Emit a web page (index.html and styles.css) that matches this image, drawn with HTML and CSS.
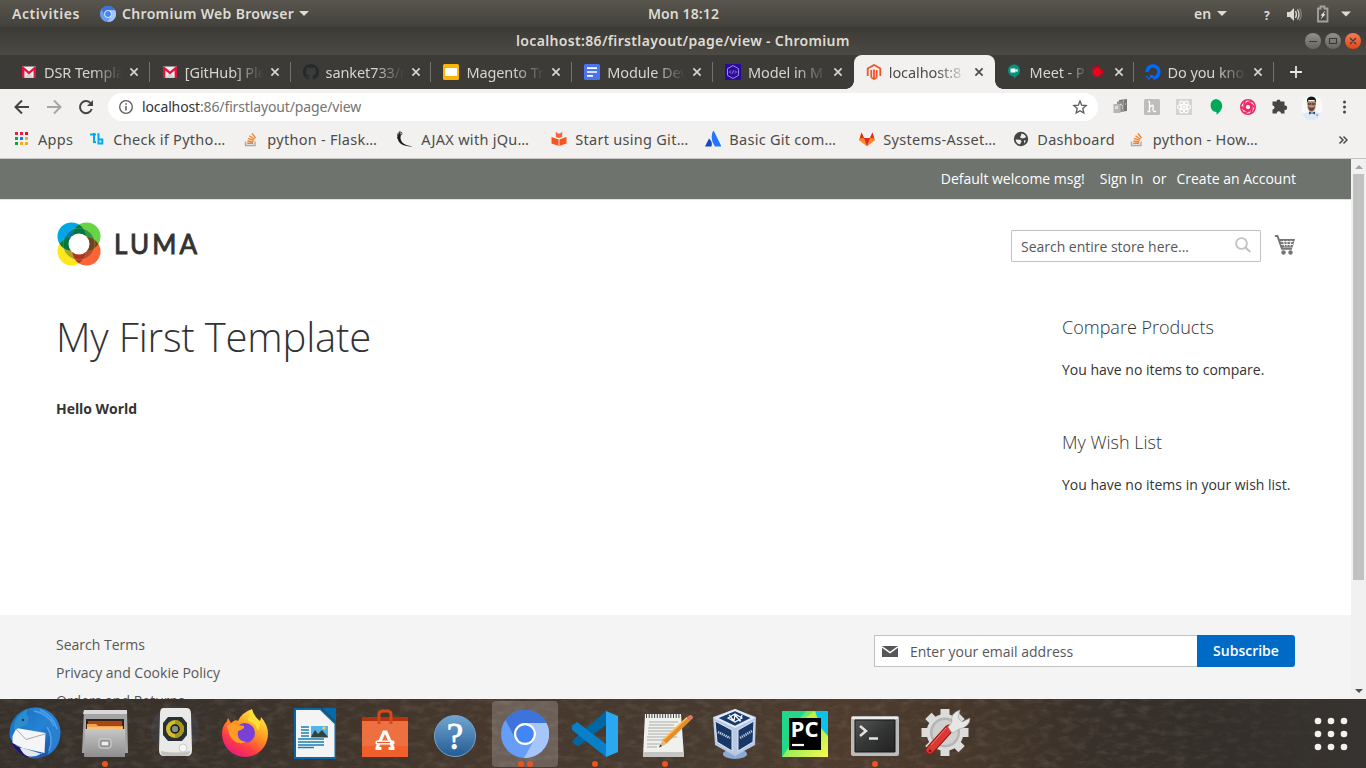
FILE: index.html
```html
<!DOCTYPE html>
<html lang="en">
<head>
<meta charset="utf-8">
<title>localhost:86/firstlayout/page/view</title>
<link rel="stylesheet" href="styles.css">
</head>
<body>
<svg class="defs" width="0" height="0">
  <symbol id="x" viewBox="0 0 10 10"><path d="M1.400 1.400l7.200 7.200M8.600 1.400L1.400 8.600" stroke="currentColor" stroke-width="1.700" fill="none"/></symbol>
  <symbol id="gmail" viewBox="0 0 16 16"><path d="M1 2.500h14V14H1z" fill="#eee"/><path d="M3 14l5-5 5 5z" fill="#d2d2d2"/><path d="M1 14V2.500h1.200L8 7.500l5.800-5H15V14h-2.400V6.500L8 10.400 3.400 6.500V14z" fill="#e2143c"/></symbol>
  <symbol id="so" viewBox="0 0 16 16"><path d="M2.500 10.500v4h9.500v-4" fill="none" stroke="#a7a9ab" stroke-width="1.400"/><path d="M4.200 12.300h6M4.400 10l6 .9M5 7.400l5.800 2M6.500 4.700l5 3.600M9 2.300l3.600 4.900" stroke="#f48024" stroke-width="1.400" fill="none"/></symbol>
  <symbol id="chromium" viewBox="0 0 48 48"><circle cx="24" cy="24" r="24" fill="#669df6"/><path d="M4.500 10A24 24 0 0 1 45.500 13H24A11 11 0 0 0 13.500 27z" fill="#3f73dc"/><path d="M45.500 13A24 24 0 0 1 23 48L33.500 29.500A11 11 0 0 0 24 13z" fill="#a6c5fa"/><circle cx="24" cy="24" r="11" fill="#fff"/><circle cx="24" cy="24" r="8.800" fill="#4285f4"/></symbol>
</svg>

<header class="topbar">
  <span class="activities">Activities</span>
  <svg class="app-ico" width="16" height="16"><use href="#chromium"/></svg>
  <span class="app-name">Chromium Web Browser</span><i class="caret"></i>
  <span class="clock">Mon 18:12</span>
  <span class="lang">en</span><i class="caret"></i>
  <svg class="tray" width="94" height="20" viewBox="0 0 94 20">
    <text x="4" y="16" class="tray-q">?</text>
    <path d="M27 8h3l4-4v13l-4-4h-3z" fill="#dfdbd2"/><path d="M35.500 7q2 3.500 0 7M37.500 5.500q3 5 0 10" fill="none" stroke="#dfdbd2" stroke-width="1.200"/><path d="M39.500 4.500q3.500 6 0 12" fill="none" stroke="#9b978f"/>
    <path d="M58 4.500h2.500v-2h4v2H67.500v13H58z" fill="none" stroke="#a5a29c" stroke-width="1.800"/><path d="M65.500 6.500l-5 5h2l-2 4 5-5.200h-2z" fill="#eee"/>
    <path d="M81 7.500h10l-5 5z" fill="#dfdbd2"/>
  </svg>
</header>

<div class="titlebar">
  <span class="win-title">localhost:86/firstlayout/page/view - Chromium</span>
  <svg class="win-btns" width="58" height="18" viewBox="0 0 58 18">
    <defs><linearGradient id="gb" x2="0" y2="1"><stop stop-color="#91908b"/><stop offset="1" stop-color="#65645f"/></linearGradient><linearGradient id="ob" x2="0" y2="1"><stop stop-color="#f37b57"/><stop offset="1" stop-color="#df4818"/></linearGradient></defs>
    <circle cx="9" cy="9" r="8" fill="url(#gb)"/><circle cx="29" cy="9" r="8" fill="url(#gb)"/><circle cx="49" cy="9" r="8" fill="url(#ob)"/>
    <path d="M5 9.500h8M25.500 6.500h7v5h-7zM46 6l6 6M52 6l-6 6" fill="none" stroke="#3a3935" stroke-width="1.100"/>
  </svg>
</div>

<nav class="tabs">
  <div class="tab"><svg class="fav"><use href="#gmail"/></svg><span class="t">DSR Templa</span><svg class="x"><use href="#x"/></svg></div>
  <div class="tab"><svg class="fav"><use href="#gmail"/></svg><span class="t">[GitHub] Ple</span><svg class="x"><use href="#x"/></svg></div>
  <div class="tab"><svg class="fav" viewBox="0 0 16 16"><path fill="#24292e" d="M8 0C3.580 0 0 3.580 0 8c0 3.540 2.290 6.530 5.470 7.590.4.070.55-.17.55-.38v-1.490c-2.230.48-2.700-.94-2.700-.94-.36-.92-.9-1.170-.9-1.170-.72-.5.060-.48.060-.48.8.06 1.230.82 1.230.82.7 1.220 1.870.87 2.330.66.070-.52.28-.87.5-1.070-1.770-.2-3.640-.89-3.640-3.950 0-.87.31-1.590.82-2.150-.08-.2-.36-1.020.080-2.120 0 0 .67-.21 2.200.82a7.600 7.600 0 0 1 4 0c1.530-1.040 2.200-.82 2.200-.82.44 1.100.16 1.920.080 2.120.51.56.82 1.270.82 2.150 0 3.070-1.870 3.750-3.650 3.950.29.25.54.73.54 1.480v2.190c0 .21.150.46.550.38A8 8 0 0 0 8 0z"/></svg><span class="t">sanket733/n</span><svg class="x"><use href="#x"/></svg></div>
  <div class="tab"><svg class="fav" viewBox="0 0 16 16"><rect width="16" height="16" rx="1.500" fill="#fbb605"/><path d="M2 4h12v8H2z" fill="#fff"/></svg><span class="t">Magento Tr</span><svg class="x"><use href="#x"/></svg></div>
  <div class="tab"><svg class="fav" viewBox="0 0 16 16"><rect width="16" height="16" rx="1.500" fill="#4a73f0"/><path d="M3 4.200h10M3 8h10M3 11.800h6" stroke="#fff" stroke-width="1.700"/></svg><span class="t">Module Dev</span><svg class="x"><use href="#x"/></svg></div>
  <div class="tab last"><svg class="fav" viewBox="0 0 16 16"><path d="M0 0h16v16H0z" fill="#2c0a9c"/><path d="M8 1.500l5.500 3.200v6.600L8 14.500l-5.500-3.200V4.700zM6 6.500L4.500 8 6 9.500m4-3L11.500 8 10 9.500M8.600 6.500l-1.200 3" fill="none" stroke="#a99ae0" stroke-width=".9"/></svg><span class="t">Model in M</span><svg class="x"><use href="#x"/></svg></div>
  <div class="tab active"><svg class="fav" viewBox="0 0 16 16"><path d="M1.700 12V4.500L8 1l6.300 3.500V12M5.300 13.500V6M10.700 13.500V6M8 5.500v10M5.300 13.500L8 15l2.700-1.500" fill="none" stroke="#f3542a" stroke-width="1.800"/></svg><span class="t">localhost:8</span><svg class="x"><use href="#x"/></svg></div>
  <div class="tab meet"><svg class="fav" viewBox="0 0 16 16"><path d="M8 .5a6 6 0 0 1 3 11.200L8.300 14.500l-.3-2A6 6 0 0 1 8 .5z" transform="translate(-1 0)" fill="#019581"/><path d="M3.500 4.500h5v4h-5zM8.500 6.300l2-1.500v3.500l-2-1.500z" fill="#fff"/></svg><span class="t">Meet - P</span><svg class="rec" viewBox="0 0 14 14"><circle cx="7" cy="7" r="4.200" fill="#f5001d"/><circle cx="7" cy="7" r="5.700" fill="none" stroke="#d5001d"/></svg><svg class="x"><use href="#x"/></svg></div>
  <div class="tab do"><svg class="fav" viewBox="0 0 16 16"><path d="M8 14a6 6 0 1 0-6-6" fill="none" stroke="#0169ff" stroke-width="3.400"/><path d="M5 11h3v3H5zM2.700 13.500H5v2H2.700zM1 11.700h1.800v1.800H1z" fill="#0169ff"/></svg><span class="t">Do you kno</span><svg class="x"><use href="#x"/></svg></div>
  <svg class="plus" viewBox="0 0 12 12"><path d="M6 0v12M0 6h12" stroke="#e8e6e0" stroke-width="1.800"/></svg>
</nav>

<div class="toolbar">
  <svg class="nav-btns" width="96" height="30" viewBox="0 0 96 30" fill="none" stroke-width="2">
    <path d="M29 15H16M22 8.500L15.500 15l6.500 6.500" stroke="#45453f"/><path d="M47 15h13M54 8.500l6.500 6.500-6.500 6.500" stroke="#a7a6a3"/>
    <path d="M90.800 11.500a6 6 0 1 0 .9 5.500" stroke="#45453f"/><path d="M93 8v6h-6z" fill="#45453f"/>
  </svg>
  <div class="omnibox">
    <svg width="14" height="14" viewBox="0 0 14 14"><circle cx="7" cy="7" r="6.300" fill="none" stroke="#5a5a58" stroke-width="1.300"/><path d="M7 6v4.500M7 3.300v1.500" stroke="#5a5a58" stroke-width="1.500"/></svg>
    <span class="url"><b>localhost</b>:86/firstlayout/page/view</span>
    <svg class="star" width="16" height="16" viewBox="0 0 16 16"><path d="M8 2l1.700 4.200 4.500.4-3.400 3 1 4.400L8 11.700 4.200 14l1-4.400-3.400-3 4.500-.4z" fill="none" stroke="#5a5a58" stroke-width="1.300"/></svg>
  </div>
  <svg class="ext" width="262" height="36" viewBox="0 0 262 36">
    <path d="M21 11l8-1v12l-8 1z" fill="#777"/><path d="M19 12.500h7v10h-7z" fill="#929292"/><path d="M15.500 15h7v9h-7z" fill="#b5b5b5"/><path d="M17 17h3v3h-3z" fill="#ddd"/><path d="M22 15l3 2M25 12h1m1 3h1M24 19h1" stroke="#e1e1e1"/>
    <rect x="46" y="10" width="16" height="16" rx="1.500" fill="#bdbdbd"/><path d="M51.500 12v10M50.300 12.500h1.500M49.500 22.500h3M52 18q3.500-3.500 3.200 0-1 4.500 1.500 4.500h1.500" stroke="#fff" fill="none" stroke-width="1.300"/>
    <path d="M78 10h16v16H78z" fill="#d4d4d4"/><g fill="none" stroke="#fff" stroke-width="1.200"><ellipse cx="86" cy="18" rx="6.500" ry="2.500"/><ellipse cx="86" cy="18" rx="6.500" ry="2.500" transform="rotate(60 86 18)"/><ellipse cx="86" cy="18" rx="6.500" ry="2.500" transform="rotate(120 86 18)"/></g><circle cx="86" cy="18" r="1.300" fill="#fff"/>
    <path d="M117.500 10a6.700 6.700 0 0 1 6.700 6.700c0 4-3 7-5.500 9l-.3-2.600A6.700 6.700 0 0 1 117.500 10z" fill="#00a959"/>
    <g transform="translate(150 18)" fill="none" stroke="#ee2867" stroke-width="1.600"><circle r="7.200"/><path id="sw" d="M0-3.300L3.200-1.400Q5.200 1 2.800 5.800"/><path d="M0-3.300L3.200-1.400Q5.200 1 2.800 5.800" transform="rotate(60)"/><path d="M0-3.300L3.200-1.400Q5.200 1 2.800 5.800" transform="rotate(120)"/><path d="M0-3.300L3.200-1.400Q5.200 1 2.800 5.800" transform="rotate(180)"/><path d="M0-3.300L3.200-1.400Q5.200 1 2.800 5.800" transform="rotate(240)"/><path d="M0-3.300L3.200-1.400Q5.200 1 2.800 5.800" transform="rotate(300)"/></g>
    <path d="M174 13h4a2 2 0 1 1 4 0h4v4a2.200 2.200 0 1 1 0 4.300V25h-3.500a2 2 0 1 0-4.300 0H174v-4a2 2 0 1 0 0-4z" transform="translate(.5 -.5)" fill="#454541"/>
    <circle cx="214" cy="17.500" r="10.500" fill="#fafbf8"/><path d="M204.500 25l5.500-2.500h8l5 2.500a10 10 0 0 1-18.500 0z" fill="#dceaf6"/><path d="M209.500 12h8v7q-1.500 4-4 4t-4-4z" fill="#c99579"/><path d="M209 14q-1-6.500 4.500-6.500T218 14l-1.500-3h-6z" fill="#171717"/><path d="M209.700 17l2 1.500h3.500l2-1.500q-1 5-3.700 5t-3.800-5z" fill="#65443a"/><path d="M210 14.200h3v1.600h-3zM214.300 14.200h3v1.600h-3z" fill="none" stroke="#222" stroke-width=".7"/><path d="M211 22.500l3 1.200 3-1.200v3l-3-1.200-3 1.200z" fill="#3b4b6b"/><path d="M218 26h2" stroke="#55789f"/>
    <g fill="#454541"><circle cx="246.500" cy="13" r="1.500"/><circle cx="246.500" cy="18" r="1.500"/><circle cx="246.500" cy="23" r="1.500"/></g>
  </svg>
</div>

<div class="bookmarks">
  <a class="bm w-apps"><svg viewBox="0 0 16 16"><path d="M1 1h3v3H1zM6 1h3v3H6z" fill="#ed1c3c"/><path d="M11 1h3v3h-3z" fill="#e0121f"/><path d="M1 6h3v3H1zM1 11h3v3H1z" fill="#00a651"/><path d="M6 6h3v3H6z" fill="#0a7cff"/><path d="M11 6h3v3h-3zM6 11h3v3H6zM11 11h3v3h-3z" fill="#fbab12"/></svg>Apps</a>
  <a class="bm"><svg viewBox="0 0 16 16"><path d="M1 3.500h6M5 2v9h2M9.500 3v10.500M8.300 3.300h2M10 8.500h3.300v4H10" fill="none" stroke="#00acee" stroke-width="2"/></svg>Check if Pytho…</a>
  <a class="bm"><svg><use href="#so"/></svg>python - Flask…</a>
  <a class="bm"><svg viewBox="0 0 16 16"><path d="M3 .5Q-1 6 2 11q4 5 13.500 4.300Q8 14.500 5.300 11.500 2.500 8 4 4.500z" fill="#1c1c1c"/><path d="M3 .5Q-1 3 .8 8M3 1q3 0 1.500 3" stroke="#444" fill="none"/></svg>AJAX with jQu…</a>
  <a class="bm"><svg viewBox="0 0 16 16"><path d="M4.800 6V.8L7 2.500h2L11.200.8V6L8 7z" fill="#ff613a"/><path d="M.5 6L8 8.500 15.500 6v6.500L8 15 .5 12.500z" fill="#f9531d"/><path d="M8 8.500V15M3 6l5 2 5-2" stroke="#fff" stroke-width=".8" fill="none"/></svg>Start using Git…</a>
  <a class="bm"><svg viewBox="0 0 16 16"><path d="M4 7.500q4 3.500 2.500 8H0z" fill="#1547c6"/><path d="M8 0q1 0 1.500 1.300l7 14.200H10Q4.500 8 8 0z" fill="#2476ff"/></svg>Basic Git com…</a>
  <a class="bm"><svg viewBox="0 0 16 16"><path d="M0 9l2.500-7.500L5 7h6l2.500-5.500L16 9l-8 6z" fill="#fc6d26"/><path d="M0 9l8 6-3-8zM16 9l-8 6 3-8z" fill="#fc8a26"/><path d="M5 7h6l-3 8zM2.500 1.500L5 7H1zM13.500 1.500L11 7h4z" fill="#e22929"/></svg>Systems-Asset…</a>
  <a class="bm w-dash"><svg viewBox="0 0 16 16"><circle cx="8" cy="8" r="7.200" fill="#454541"/><path d="M2.500 8.500l5 .2 1 1.800-1.500 3Q3 12.500 2.500 8.500zM8.500 2.500q3.500.5 4.500 3.500l-1.500 1-2 .5L7 6.500l1-2zM11 9.500l2 0-2 3z" fill="#f1f0ef"/></svg>Dashboard</a>
  <a class="bm w-last"><svg><use href="#so"/></svg>python - How…</a>
  <svg class="more" viewBox="0 0 10 10"><path d="M1.500 1.500L5 5 1.500 8.500M5.500 1.500L9 5 5.500 8.500" fill="none" stroke="#4c4c49" stroke-width="1.500"/></svg>
</div>

<div class="viewport">
  <div class="page">
    <div class="panel"><span>Default welcome msg!</span><a class="signin">Sign In</a><span class="or">or</span><a>Create an Account</a></div>
    <div class="store-head">
      <a class="logo">
        <svg width="44" height="44" viewBox="0 0 44 44">
          <defs><clipPath id="cb"><circle cx="14.500" cy="14.500" r="14"/></clipPath><clipPath id="cg"><circle cx="29.500" cy="14.500" r="14"/></clipPath><clipPath id="cr"><circle cx="29.500" cy="29.500" r="14"/></clipPath><clipPath id="cy"><circle cx="14.500" cy="29.500" r="14"/></clipPath></defs>
          <circle cx="14.500" cy="14.500" r="14" fill="#00a7e5"/><circle cx="29.500" cy="14.500" r="14" fill="#65d544"/><circle cx="29.500" cy="29.500" r="14" fill="#ff6334"/><circle cx="14.500" cy="29.500" r="14" fill="#ffe71c"/>
          <g clip-path="url(#cb)"><circle cx="22" cy="22" r="16" fill="#0079a5"/></g><g clip-path="url(#cg)"><circle cx="22" cy="22" r="16" fill="#3b9240"/></g><g clip-path="url(#cr)"><circle cx="22" cy="22" r="16" fill="#b94a29"/></g><g clip-path="url(#cy)"><circle cx="22" cy="22" r="16" fill="#aaa22f"/></g>
          <g clip-path="url(#cb)"><circle cx="29.500" cy="14.500" r="14" fill="#00773b"/><circle cx="14.500" cy="29.500" r="14" fill="#00773b"/></g><g clip-path="url(#cr)"><circle cx="29.500" cy="14.500" r="14" fill="#70451c"/><circle cx="14.500" cy="29.500" r="14" fill="#b03522"/></g>
          <circle cx="22" cy="22" r="16" fill="none" stroke="#fff" stroke-opacity=".25" stroke-width=".7"/>
          <circle cx="22" cy="22" r="10.500" fill="#fff"/>
        </svg><span>LUMA</span>
      </a>
      <div class="search"><span>Search entire store here...</span><svg width="16" height="16" viewBox="0 0 16 16"><circle cx="6.500" cy="6.500" r="5.400" fill="none" stroke="#c2c2c2" stroke-width="1.800"/><path d="M10.300 10.300l5 4.700" stroke="#c2c2c2" stroke-width="2.200"/></svg></div>
      <svg class="cart" width="22" height="22" viewBox="0 0 22 22"><path d="M1 2h2.500L8 14.800h10" fill="none" stroke="#757575" stroke-width="2"/><path d="M4.500 5H21l-2.500 8.500H7.500z" fill="#757575"/><path d="M6.500 7.600h13M7 10.500h12M9.500 6.500l1 6M13 6.500v6M17 6.500l-1 6" stroke="#fff" stroke-width=".9"/><circle cx="9.500" cy="18.500" r="2.200" fill="#757575"/><circle cx="16.500" cy="18.500" r="2.200" fill="#757575"/></svg>
    </div>
    <div class="columns">
      <main><h1>My First Template</h1><p class="hello">Hello World</p></main>
      <aside><h2>Compare Products</h2><p>You have no items to compare.</p><h2>My Wish List</h2><p>You have no items in your wish list.</p></aside>
    </div>
    <footer>
      <ul><li>Search Terms</li><li>Privacy and Cookie Policy</li><li>Orders and Returns</li></ul>
      <div class="newsletter"><div class="email"><svg width="16" height="11" viewBox="0 0 16 11"><path d="M0 0h16v11H0z" fill="#575757"/><path d="M0 .8l8 5.700L16 .8" fill="none" stroke="#fff" stroke-width="1.500"/></svg><span>Enter your email address</span></div><button>Subscribe</button></div>
    </footer>
  </div>
  <div class="scroll"><i class="up"></i><i class="thumb"></i><i class="down"></i></div>
</div>

<div class="dock">
  <svg class="wall" width="1366" height="69"><filter id="n" x="0" y="0" width="100%" height="100%"><feTurbulence type="fractalNoise" baseFrequency=".08 .16" numOctaves="4" seed="8"/><feColorMatrix values="0 0 0 0 0.45  0 0 0 0 0.36  0 0 0 0 0.27  1.6 0 0 0 -0.7"/></filter><rect width="1366" height="69" filter="url(#n)"/></svg>
  <div class="item"><svg viewBox="0 0 70 69"><defs><linearGradient id="tb" x2="1" y2="1"><stop stop-color="#196bb5"/><stop offset=".5" stop-color="#2484d6"/><stop offset="1" stop-color="#1f3a8c"/></linearGradient></defs><circle cx="35" cy="34" r="25.500" fill="url(#tb)"/><path d="M35 8.500a25.500 25.500 0 0 1 25 30q-2 12-13 18 6-13 1-24 0-16-19-22z" fill="#2b7fd0"/><path d="M34 12q14 2 20 15M40 11q13 5 17 19M47 28q7 10 2 24" stroke="#48a3ea" stroke-width="1.500" fill="none"/><path d="M9.500 39q4 14 18 20l4-4-15-8q-4-4-7-8z" fill="#261368"/><path d="M12.500 37l4-8 29 5-1 20-22-5-10-5z" fill="#f4f5f6"/><path d="M16 30l10 10.500L45 35" fill="none" stroke="#aaa"/><path d="M23 49l19 6 0-1q-7 5-15 3-5-3-7-8z" fill="#e4e8ee"/><path d="M14 31q-1-14 14-21-3 6 1 8l-2 8q-7 2-13 5z" fill="#298dcf"/><circle cx="23" cy="21" r="1.200" fill="#132e62"/></svg></div>
  <div class="item"><svg viewBox="0 0 70 69"><defs><linearGradient id="fg" x2="0" y2="1"><stop stop-color="#c7c7c7"/><stop offset="1" stop-color="#8d8d8d"/></linearGradient></defs><path d="M14 11h43l1 43H12z" fill="#a4a4a4"/><path d="M14 11h43v4H13z" fill="#d9d9d9"/><path d="M16 20h38v11H16z" fill="#30231e"/><path d="M18 22h34v8H18z" fill="#aa4614"/><path d="M17 25h9l2 2h25v4H17z" fill="#f0a54e"/><path d="M17 29h35" stroke="#ffe0a7"/><path d="M15 30h40v28H14z" fill="url(#fg)"/><rect x="29" y="40" width="12" height="9" rx="2" fill="#a4a4a4" stroke="#d3d3d3"/><rect x="31" y="42" width="8" height="5" rx="1" fill="#eee" stroke="#777"/></svg><i class="dot"></i></div>
  <div class="item"><svg viewBox="0 0 70 69"><circle cx="35" cy="31" r="24" fill="#496184" opacity=".18"/><path d="M23 9h24q4 0 4 6l1 36q0 6-5 6H24q-5 0-5-6l1-36q0-6 3-6z" fill="#e9e9e7"/><path d="M21 52q14 3 29 0v2q-2 3-5 3H26q-4 0-5-3z" fill="#c1c1be"/><path d="M28 18h14l5 6v12l-5 6H28l-5-6V24z" fill="#273035"/><circle cx="35" cy="30" r="9" fill="#d3bd26"/><path d="M35 21a9 9 0 0 1 0 18z" fill="#a89519"/><circle cx="35" cy="30" r="4" fill="#858c8d" stroke="#111" stroke-width="1.500"/><circle cx="43" cy="49" r="4" fill="#f6f6f5" stroke="#ccc"/></svg></div>
  <div class="item"><svg viewBox="0 0 70 69"><defs><linearGradient id="ff" x1=".8" x2=".2" y2="1"><stop stop-color="#fff34f"/><stop offset=".4" stop-color="#ff9a1f"/><stop offset=".72" stop-color="#ff3b47"/><stop offset="1" stop-color="#e31587"/></linearGradient></defs><path d="M42 10q-1 7 7 13 2-2 2-5 7 8 7 17a23 23 0 1 1-46 0q0-8 5-13l1-3 3 5q4-4 7-2Q31 14 42 10z" fill="url(#ff)"/><circle cx="35" cy="34" r="10" fill="#7941d7"/><path d="M17 27q5-5 11-1l6 1q1 3-6 5-2 10 9 11-12 4-17-6z" fill="#ff9b27"/><path d="M42 10q-4 8-4 12 8 2 10 10l3-9q-7-5-9-13z" fill="#ffdf37"/></svg></div>
  <div class="item"><svg viewBox="0 0 70 69"><path d="M14 9h27l15 15v36H14z" fill="#0a66a4"/><path d="M16 11h24l14.500 14v33H16z" fill="#f4f4f4"/><path d="M42 9h14v14z" fill="#056aa8"/><path d="M21 28h8M21 31h8M21 34h8M21 37h8M18 40h26M18 43h26M18 46h26M18 48.500h16" stroke="#1d7fb4" stroke-width="1.300"/><path d="M31 27h17v12H31z" fill="#55b3e7"/><path d="M31 38l4-7 3 4 4-4 6 7z" fill="#344339"/><circle cx="44" cy="29" r="1.500" fill="#f7d446"/></svg></div>
  <div class="item"><svg viewBox="0 0 70 69"><path d="M12 18h46v8H12z" fill="#b5330e"/><path d="M12 22h46v36H12z" fill="#ed7040"/><path d="M12 47h46v11H12z" fill="#f1602a"/><path d="M29 25V15q0-2 3-3h6q3 1 3 3v10" fill="none" stroke="#d74a18" stroke-width="3"/><path d="M27 49l7-16h2l7 16M25.500 49.500h6M38.500 49.500h6" fill="none" stroke="#fff" stroke-width="3.200"/><rect x="25.500" y="41.500" width="19" height="4" rx="1.500" fill="#fff"/><path d="M27 43.500h13" stroke="#e85f2d" stroke-width="1.200"/></svg></div>
  <div class="item"><svg viewBox="0 0 70 69"><defs><linearGradient id="hb" x2="0" y2="1"><stop stop-color="#72a5d0"/><stop offset="1" stop-color="#235c94"/></linearGradient></defs><circle cx="35" cy="37" r="20.500" fill="url(#hb)" stroke="#72a2ca"/><text x="35" y="50" class="help">?</text></svg></div>
  <div class="item on"><svg viewBox="0 0 70 69"><use href="#chromium" x="11" y="11" width="48" height="48"/></svg><i class="dot"></i><i class="dot"></i></div>
  <div class="item"><svg viewBox="0 0 70 69"><path d="M46 12v14L18 47.500l-6-4.500 2-3z" fill="#0066a6"/><path d="M12 27l5-4 29 22v13L12 31z" fill="#087fc8"/><path d="M46 12l12 5v36l-12 5z" fill="#2aa9f2"/></svg><i class="dot"></i></div>
  <div class="item"><svg viewBox="0 0 70 69"><path d="M15 15h36l3 42H13z" fill="#f0f0ed"/><path d="M13 53h41v5H13z" fill="#c5c5c1"/><path d="M16 17h35" stroke="#484848" stroke-width="4" stroke-dasharray="1 1.700"/><path d="M19 23h29M19 26h25M18 29h31M18 32h29M18 35h29M17 38h30M17 41h20M17 45h13M17 48h10" stroke="#aaa" stroke-width="1"/><path d="M29 48.500l4-8L57 18l3.500 3.500-24 23z" fill="#e58e25"/><path d="M34 40L57 18.500" stroke="#ffc063" stroke-width="1.500"/><path d="M29 48.500l4-8 3.500 4z" fill="#d8be8b"/><path d="M29 48.500l1.500-3 1.500 1.500z" fill="#333"/><path d="M57 18l3-2q3 0 3 3l-2.500 2.500z" fill="#e57667"/></svg><i class="dot"></i></div>
  <div class="item"><svg viewBox="0 0 70 69"><ellipse cx="35" cy="55" rx="12" ry="5" fill="#8ca9d3"/><path d="M35 10l21 8-1 28-20 11-20-11-2-28z" fill="#b9c9e4"/><path d="M35 11l18 8-18 9-19-9z" fill="#193b70" stroke="#e3ebf7" stroke-width="2"/><path d="M15 22l17 9v21l-15-9zM38 31l16-9-1 21-15 9z" fill="#173867" stroke="#dce6f3"/><path d="M29 16l5 6 1-6 5 6 2-6M28 19l7-4 7 4-7 4z" fill="none" stroke="#fff" stroke-width="1.200"/><path d="M18 33l12 6M40 39l12-7" stroke="#b8c8df" stroke-width="2.500" stroke-dasharray="1.300 .8"/></svg></div>
  <div class="item"><svg viewBox="0 0 70 69"><defs><linearGradient id="pc" x2="1" y2="1"><stop stop-color="#21d789"/><stop offset=".45" stop-color="#8fec5c"/><stop offset="1" stop-color="#fcf84a"/></linearGradient></defs><path d="M12 12h46v46H12z" fill="url(#pc)"/><path d="M12 12h24l-17 20v16l-7 10z" fill="#21d789"/><path d="M45 12h13v25l-7-8z" fill="#09c4e8"/><path d="M35 19l10-7 2 7z" fill="#c4ee46"/><path d="M19 19h32v32H19z" fill="#000"/><path d="M22 46h12" stroke="#fff" stroke-width="2.200"/><text x="20.500" y="37.500" class="pc" textLength="28" lengthAdjust="spacingAndGlyphs">PC</text></svg></div>
  <div class="item"><svg viewBox="0 0 70 69"><defs><linearGradient id="tm" x2="1" y2="1"><stop stop-color="#555"/><stop offset=".5" stop-color="#343535"/><stop offset="1" stop-color="#222"/></linearGradient></defs><rect x="11" y="17" width="48" height="40" rx="2" fill="#bbb"/><path d="M12 18h46v2H12z" fill="#eee"/><path d="M15 21h40v32H15z" fill="url(#tm)" stroke="#161616"/><path d="M20 27l6 5-6 5" fill="none" stroke="#e3e3e3" stroke-width="2.500"/><path d="M29 39.500h9" stroke="#e3e3e3" stroke-width="2.500"/></svg><i class="dot"></i></div>
  <div class="item"><svg viewBox="0 0 70 69"><g stroke="#dcddda" stroke-width="9"><path d="M35 10v47M11.500 33.500h47M18.400 16.900l33.200 33.200M51.600 16.900L18.400 50.100"/></g><circle cx="35" cy="33.500" r="18.500" fill="#dcddda"/><circle cx="35" cy="33.500" r="15" fill="#b5b6b3"/><circle cx="35" cy="33.500" r="12.500" fill="#d0d1ce"/><path d="M20 51L39 30" stroke="#951515" stroke-width="9" stroke-linecap="round"/><path d="M20 51L39 30" stroke="#dc3935" stroke-width="7" stroke-linecap="round"/><path d="M21 46L36 29" stroke="#f07870"/><path d="M38 28l4-5q-2-9 8-12l-2 8 4 4 8-4q0 9-11 11l-3 2-4 2z" fill="#e6e7e4" stroke="#a0a19e" stroke-width=".6"/><circle cx="20" cy="52" r="1.400" fill="#7d1515"/></svg></div>
  <svg class="grid" viewBox="0 0 34 34" fill="#f2f1ed"><circle cx="4" cy="4" r="3.300"/><circle cx="17" cy="4" r="3.300"/><circle cx="30" cy="4" r="3.300"/><circle cx="4" cy="17" r="3.300"/><circle cx="17" cy="17" r="3.300"/><circle cx="30" cy="17" r="3.300"/><circle cx="4" cy="30" r="3.300"/><circle cx="17" cy="30" r="3.300"/><circle cx="30" cy="30" r="3.300"/></svg>
</div>
</body>
</html>
```
FILE: styles.css
```css
* { box-sizing: border-box; }
body { margin: 0; width: 1366px; height: 768px; overflow: hidden; display: flex; flex-direction: column; font-family: "Noto Sans", "Open Sans", sans-serif; font-size: 14px; color: #333; }
.defs { position: absolute; }
svg { flex: none; display: block; }
p, h1, h2, ul { margin: 0; padding: 0; }

.topbar { height: 27px; display: flex; align-items: center; background: linear-gradient(#59564e, #43413c); color: #dfdbd2; font-weight: 600; font-size: 14px; white-space: nowrap; }
.activities { width: 68px; margin-left: 12px; letter-spacing: .55px; }
.app-ico { margin-left: 20px; }
.app-name { margin-left: 6px; width: 173px; letter-spacing: .33px; }
.caret { border: 5px solid transparent; border-top-color: #dfdbd2; border-bottom: 0; margin-left: 4px; }
.clock { margin-left: 339px; width: 73px; letter-spacing: .1px; padding-bottom: 1px; }
.lang { margin-left: 473px; width: 19px; }
.tray { margin-left: 33px; }
.tray-q { font: 700 12px "Noto Sans", sans-serif; fill: #dfdbd2; }

.titlebar { height: 28px; display: flex; align-items: center; background: linear-gradient(#3b3a36, #4d4a44); color: #dfdbd2; font-weight: 600; }
.win-title { width: 336px; margin-left: 516px; white-space: nowrap; letter-spacing: .34px; padding-bottom: 2px; }
.win-btns { margin-left: auto; margin-right: 4px; }

.tabs { height: 34px; background: #3c3b37; display: flex; align-items: center; padding-left: 9px; }
.tab { width: 140.800px; height: 34px; display: flex; align-items: center; padding-left: 12px; color: #d8d5ce; flex: none; background: linear-gradient(#74726c, #74726c) right center / 1px 20px no-repeat; }
.tab.last { background: none; }
.tab.meet { width: 139px; }
.tab.do { padding-left: 11px; }
.tab.active { background: #f2f1f0; color: #4c4c49; border-radius: 8px 8px 0 0; position: relative; }
.tab.active::before, .tab.active::after { content: ""; position: absolute; bottom: 0; width: 8px; height: 8px; }
.tab.active::before { left: -8px; background: radial-gradient(circle at 0 0, transparent 7.500px, #f2f1f0 8px); }
.tab.active::after { right: -8px; background: radial-gradient(circle at 100% 0, transparent 7.500px, #f2f1f0 8px); }
.fav { width: 16px; height: 16px; }
.t { width: 80px; margin-left: 7px; white-space: nowrap; font-size: 14.500px; letter-spacing: -.1px; -webkit-mask-image: linear-gradient(90deg, #000 60%, transparent 98%); mask-image: linear-gradient(90deg, #000 60%, transparent 98%); }
.x { width: 10px; height: 10px; margin-left: 5px; }
.meet .t { width: 60px; }
.rec { width: 14px; height: 14px; }
.meet .x { margin-left: 10px; }
.plus { width: 12px; height: 12px; margin-left: 16px; }

.toolbar { height: 36px; background: #f2f1f0; display: flex; align-items: center; }
.omnibox { margin-left: 12px; width: 990px; height: 28px; border-radius: 14px; background: #fff; display: flex; align-items: center; padding: 0 10px 0 11px; }
.url { margin-left: 9px; font-size: 14px; letter-spacing: -.13px; color: #747472; padding-bottom: 1px; }
.url b { font-weight: 400; color: #333; }
.star { margin-left: auto; }

.bookmarks { height: 34px; background: #f2f1f0; border-bottom: 1px solid #c6c5c3; display: flex; align-items: center; padding: 0 0 4px 14px; color: #4c4c49; }
.bm { width: 154px; display: flex; align-items: center; white-space: nowrap; font-size: 14.500px; letter-spacing: .28px; line-height: 20px; padding-bottom: 1px; flex: none; }
.bm svg { width: 16px; height: 16px; margin-right: 8px; }
.w-apps { width: 75.300px; }
.w-dash { width: 115.500px; }
.more { width: 10px; height: 10px; margin: 0 18px 0 auto; }
.w-last { width: 130px; }

.viewport { height: 540px; display: flex; font-family: "Open Sans", sans-serif; }
.page { width: 1351px; height: 540px; overflow: hidden; background: #fff; display: flex; flex-direction: column; }
.panel { height: 41px; flex: none; background: #6e736e; border-bottom: 1px solid #e0e0e0; color: #fff; display: flex; align-items: center; justify-content: flex-end; padding: 0 55px 1px 0; }
.signin { margin-left: 15px; }
.or { margin: 0 10px 0 9px; }
.store-head { height: 95px; flex: none; display: flex; align-items: flex-start; padding: 22px 55px 0 57px; }
.logo { display: flex; align-items: center; margin-right: auto; }
.logo span { font: 400 26px/44px Lato, sans-serif; -webkit-text-stroke: .9px #333; letter-spacing: 3.200px; margin-left: 13px; }
.search { margin-top: 8px; width: 250px; height: 32px; border: 1px solid #c2c2c2; border-radius: 1px; display: flex; align-items: center; justify-content: space-between; padding: 1px 9px 0 9px; color: #575757; letter-spacing: -.02px; }
.search svg { margin-top: -3px; }
.cart { margin: 12px 0 0 13px; }
.columns { height: 320px; flex: none; display: flex; justify-content: space-between; padding: 0 56px; }
h1 { font-size: 40px; font-weight: 300; line-height: 44px; letter-spacing: -.18px; margin-top: 20px; white-space: nowrap; }
.hello { font-weight: 700; line-height: 20px; margin-top: 40px; letter-spacing: -.05px; }
aside { width: 233px; padding-top: 22px; white-space: nowrap; }
aside h2 { font-size: 18px; font-weight: 300; line-height: 20px; margin-bottom: 23px; }
aside p { line-height: 20px; margin-bottom: 52px; }
footer { height: 90px; flex: none; background: #f4f4f4; display: flex; justify-content: space-between; padding: 20px 56px 0; color: #575757; }
footer ul { list-style: none; }
footer li { line-height: 20px; margin-bottom: 8px; }
.newsletter { display: flex; height: 32px; }
.email { width: 323px; border: 1px solid #c2c2c2; border-right: 0; background: #fff; display: flex; align-items: center; padding-left: 7px; }
.email span { margin: 1px 0 0 12px; }
.newsletter button { width: 98px; border: 0; border-radius: 0 3px 3px 0; background: #006bc7; color: #fff; font: 600 14px "Open Sans", sans-serif; padding: 0 0 1px; }
.scroll { width: 15px; background: #f1f1f1; display: flex; flex-direction: column; align-items: center; }
.up { border: 4px solid transparent; border-top: 0; border-bottom-color: #a3a3a3; margin-top: 6px; }
.thumb { width: 11px; height: 406px; margin-top: 5px; background: #c1c1c1; }
.down { border: 4px solid transparent; border-bottom: 0; border-top-color: #505050; margin-top: auto; margin-bottom: 6px; }

.dock { height: 69px; display: flex; position: relative; background: linear-gradient(90deg, #37312b 0, #3a332c 16%, #46382d 35%, #463a30 50%, #4e3c2e 62%, #45372b 72%, #38302a 80%, #342f2a 90%, #373330 100%); }
.wall { position: absolute; inset: 0; opacity: .22; -webkit-mask-image: linear-gradient(90deg, #000 85%, transparent); mask-image: linear-gradient(90deg, #000 85%, transparent); }
.item { width: 70px; height: 69px; position: relative; display: flex; justify-content: center; align-items: flex-end; gap: 3px; padding-bottom: 1px; }
.item svg { position: absolute; left: 0; top: 0; width: 70px; height: 69px; }
.item.on::before { content: ""; position: absolute; left: 2px; top: 2px; width: 66px; height: 66px; border-radius: 4px; background: rgba(255, 255, 255, .2); }
.dot { width: 6px; height: 6px; border-radius: 50%; background: #e95420; position: relative; }
.grid { width: 34px; height: 34px; margin: 18px 18px 0 auto; position: relative; }
.help { font: 400 37px "Liberation Serif", serif; fill: #fff; stroke: #fff; stroke-width: .8px; text-anchor: middle; }
.pc { font: 700 21px "Open Sans", sans-serif; fill: #fff; }
```
